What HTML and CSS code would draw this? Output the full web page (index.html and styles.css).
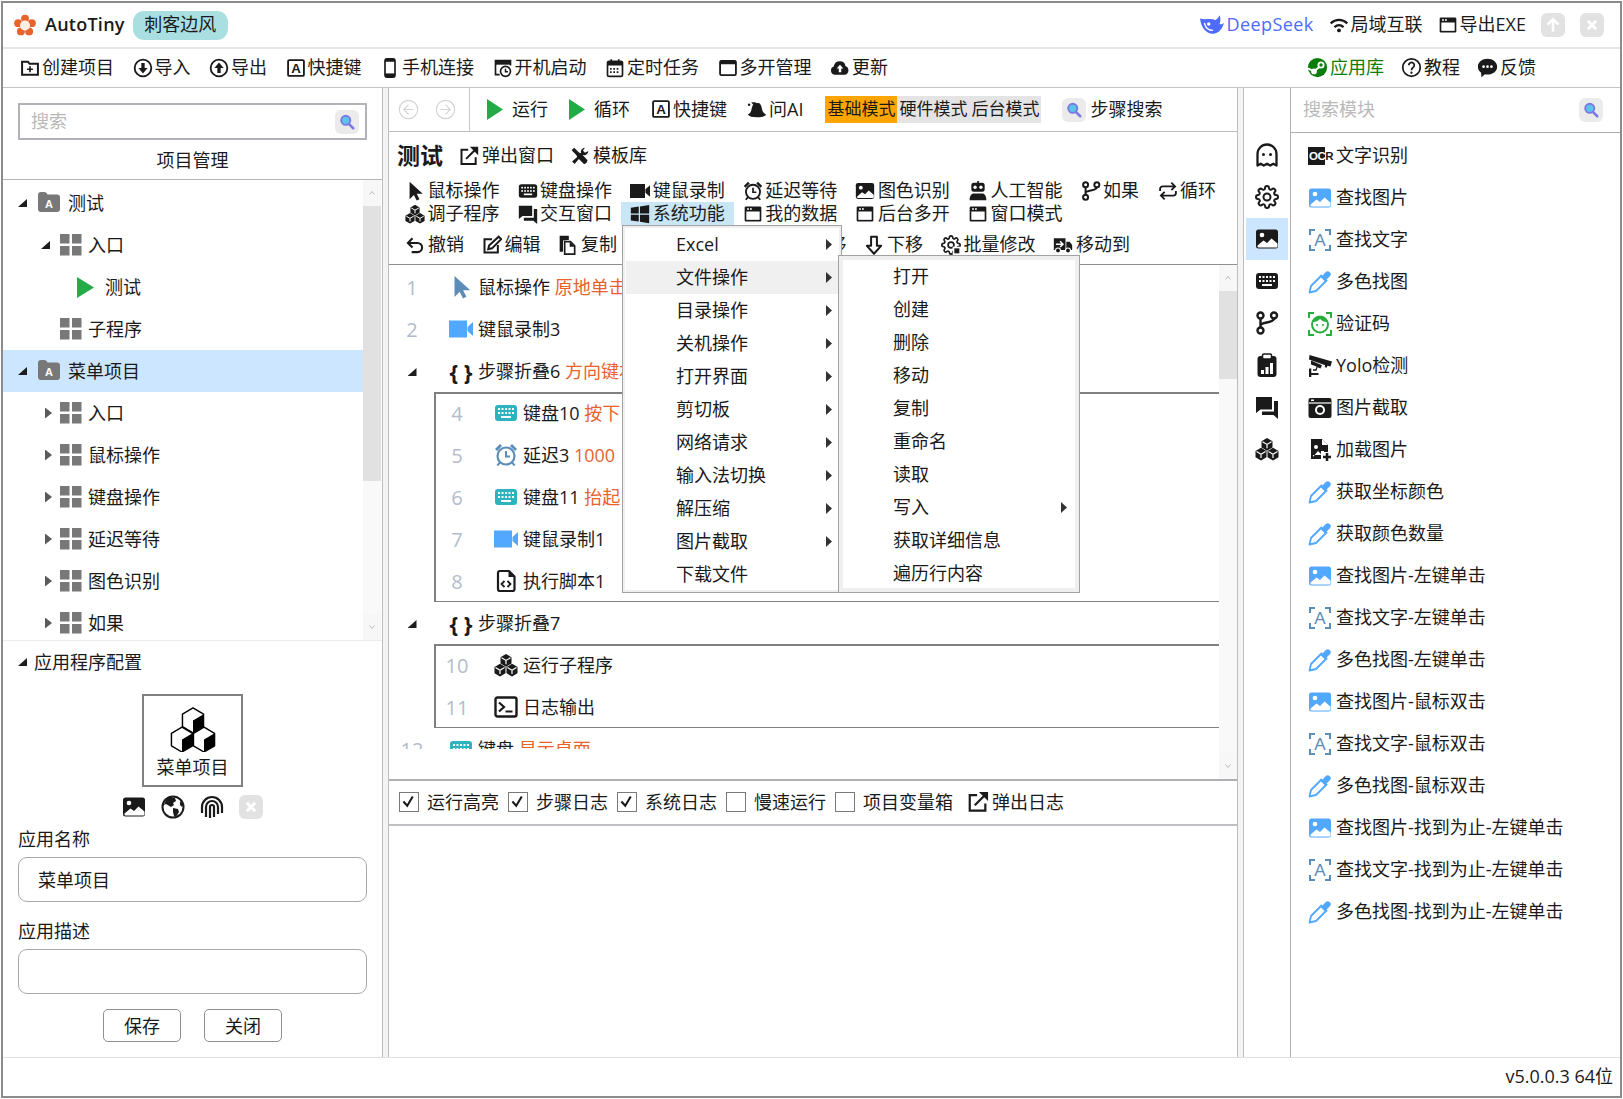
FILE: index.html
```html
<!DOCTYPE html>
<html lang="zh-CN">
<head>
  <meta charset="UTF-8" />
  <title>AutoTiny</title>
  <link rel="stylesheet" href="styles.css">
</head>
<body>
  <!-- 图标定义 -->
  <svg class="defs" xmlns="http://www.w3.org/2000/svg">
    <symbol id="logo" viewBox="0 0 24 24"><g fill="#e8622c"><circle cx="12" cy="5" r="4.300"/><circle cx="19.500" cy="10" r="4.300"/><circle cx="16.500" cy="19" r="4.300"/><circle cx="7.500" cy="19" r="4.300"/><circle cx="4.500" cy="10" r="4.300"/></g><circle cx="12" cy="12.500" r="5.500" fill="#fdeee6"/></symbol>
    <symbol id="whale" viewBox="0 0 24 24"><path fill="currentColor" d="M1 6c.5 8 6 15 13 14 5-.8 8-5 9-10-1.500 1.500-3 1.800-4 .8 1-2 1.200-5 0-7.800-.8 2-2.500 3.600-4 4.600C11.500 5.500 5 7.500 1 6z"/><circle cx="9" cy="11" r="1.600" fill="#fff"/><path d="M5 10c1 5 4 7 8 7" stroke="#fff" stroke-width="1.300" fill="none"/></symbol>
    <symbol id="wifi" viewBox="0 0 24 24"><g fill="none" stroke="currentColor" stroke-width="2.600"><path d="M2 10c6-5.500 14-5.500 20 0"/><path d="M6.500 14.500c3.500-3 7.500-3 11 0"/></g><circle cx="12" cy="18.500" r="2.300" fill="currentColor"/></symbol>
    <symbol id="appwin" viewBox="0 0 24 24"><rect x="2" y="3" width="20" height="18" rx="1.500" fill="currentColor"/><rect x="4" y="9" width="16" height="10" fill="#fff"/><rect x="5" y="5" width="2" height="2" fill="#fff"/><rect x="8.500" y="5" width="2" height="2" fill="#fff"/></symbol>
    <symbol id="folderplus" viewBox="0 0 24 24"><path fill="none" stroke="currentColor" stroke-width="2.400" d="M2.500 4.500h7l2 2.500h10v13h-19z"/><path fill="currentColor" d="M11 10h2v2.500h2.500v2H13V17h-2v-2.500H8.500v-2H11z"/></symbol>
    <symbol id="cdown" viewBox="0 0 24 24"><circle cx="12" cy="12" r="10" fill="none" stroke="currentColor" stroke-width="2.200"/><path fill="currentColor" d="M10 6h4v6h3.500L12 18.500 6.500 12H10z"/></symbol>
    <symbol id="cup" viewBox="0 0 24 24"><circle cx="12" cy="12" r="10" fill="none" stroke="currentColor" stroke-width="2.200"/><path fill="currentColor" d="M10 18h4v-6h3.500L12 5.500 6.500 12H10z"/></symbol>
    <symbol id="keybox" viewBox="0 0 24 24"><rect x="2.500" y="2.500" width="19" height="19" rx="1.500" fill="none" stroke="currentColor" stroke-width="2.200"/></symbol>
    <symbol id="phone" viewBox="0 0 24 24"><rect x="6" y="1" width="12" height="22" rx="2.500" fill="none" stroke="currentColor" stroke-width="2"/><rect x="6" y="1" width="12" height="3.500" fill="currentColor"/><rect x="6" y="18.500" width="12" height="4.500" fill="currentColor"/></symbol>
    <symbol id="boot" viewBox="0 0 24 24"><path fill="none" stroke="currentColor" stroke-width="2" d="M8 20H3V3h18v6"/><rect x="3" y="3" width="18" height="5" fill="currentColor"/><circle cx="15" cy="16" r="6" fill="#fff" stroke="currentColor" stroke-width="2"/><path d="M15 13v3.500h3" fill="none" stroke="currentColor" stroke-width="1.800"/></symbol>
    <symbol id="calendar" viewBox="0 0 24 24"><rect x="3" y="4" width="18" height="18" rx="2" fill="none" stroke="currentColor" stroke-width="2"/><rect x="3" y="4" width="18" height="5" fill="currentColor"/><path stroke="currentColor" stroke-width="2" d="M7.500 1.500v4M16.500 1.500v4"/><path stroke="currentColor" stroke-width="2" stroke-dasharray="2 2" d="M6 13h12M6 17h12"/></symbol>
    <symbol id="winline" viewBox="0 0 24 24"><rect x="2.500" y="3.500" width="19" height="17" rx="1.500" fill="none" stroke="currentColor" stroke-width="2.200"/><rect x="2.500" y="3.500" width="19" height="4" fill="currentColor"/></symbol>
    <symbol id="cloud" viewBox="0 0 24 24"><path fill="currentColor" d="M6 20a5 5 0 0 1-1.500-9.700A7.500 7.500 0 0 1 12 4a6.500 6.500 0 0 1 6.500 5.500A5.500 5.500 0 0 1 18 20z"/><path fill="#fff" d="M12 8l4 4.500h-2.500V17h-3v-4.500H8z"/></symbol>
    <symbol id="steam" viewBox="0 0 24 24"><circle cx="12" cy="12" r="11" fill="currentColor"/><circle cx="16" cy="9" r="4" fill="#fff"/><circle cx="16" cy="9" r="2" fill="currentColor"/><circle cx="8" cy="16.500" r="3.300" fill="#fff"/><path d="M1 13l7 3.500 6-5" stroke="#fff" stroke-width="2.200" fill="none"/></symbol>
    <symbol id="help" viewBox="0 0 24 24"><circle cx="12" cy="12" r="10" fill="none" stroke="currentColor" stroke-width="2"/><path d="M8.800 9.500a3.200 3.200 0 1 1 5 2.600c-1.200.8-1.800 1.400-1.800 2.900" fill="none" stroke="currentColor" stroke-width="2"/><circle cx="12" cy="18" r="1.300" fill="currentColor"/></symbol>
    <symbol id="bubble" viewBox="0 0 24 24"><path fill="currentColor" d="M12 2c6 0 11 3.800 11 9s-5 9-11 9c-1 0-2-.1-2.900-.3L5 23l-.3-5C2.500 16.200 1 13.800 1 11c0-5.200 5-9 11-9z"/><g fill="#fff"><circle cx="7.500" cy="11" r="1.500"/><circle cx="12" cy="11" r="1.500"/><circle cx="16.500" cy="11" r="1.500"/></g></symbol>
    <symbol id="play" viewBox="0 0 24 24" preserveAspectRatio="none"><path fill="#22ab46" d="M0 0l24 12L0 24z"/></symbol>
    <symbol id="circleleft" viewBox="0 0 24 24"><circle cx="12" cy="12" r="10.500" fill="none" stroke="currentColor" stroke-width="1.300"/><path fill="none" stroke="currentColor" stroke-width="1.300" d="M12 6.500L6.500 12l5.500 5.500M6.500 12H18"/></symbol>
    <symbol id="circleright" viewBox="0 0 24 24"><circle cx="12" cy="12" r="10.500" fill="none" stroke="currentColor" stroke-width="1.300"/><path fill="none" stroke="currentColor" stroke-width="1.300" d="M12 6.500l5.500 5.500-5.500 5.500M17.500 12H6"/></symbol>
    <symbol id="hat" viewBox="0 0 24 24"><path fill="currentColor" d="M12 5c3-1 5 1 6 7 .5 3 2 5 5 7-2 2-5 3-11 3S3 21 1 19c3-2 4-4 4.500-7 .4-2 1-4 2-5L5 4c3 0 5 0 7 1z"/><circle cx="2.500" cy="7" r="1.500" fill="currentColor"/></symbol>
    <symbol id="search" viewBox="0 0 24 24"><circle cx="10.500" cy="10" r="5.500" fill="#5cc3ea" stroke="#7c78e2" stroke-width="2.200"/><path d="M14.500 14.500l5 5" stroke="#7c78e2" stroke-width="3" stroke-linecap="round"/></symbol>
    <symbol id="popout" viewBox="0 0 24 24"><path fill="none" stroke="currentColor" stroke-width="2.400" d="M11 4.500H3v17h17v-8"/><path fill="none" stroke="currentColor" stroke-width="2.400" d="M8.500 15.500L21 3"/><path fill="currentColor" d="M13 1h10v10z"/></symbol>
    <symbol id="tools" viewBox="0 0 24 24"><path fill="currentColor" d="M2 5l3-3 6 6 2 .5L21 17l-1 3-3 2-8.500-8.500L8 11.500z"/><path fill="currentColor" d="M22 6a5 5 0 0 1-7 4.600L5.500 21.500 2.500 18.500 13.400 9A5 5 0 0 1 18 2l-2.500 3.500 2.500 2.500z"/></symbol>
    <symbol id="cursor" viewBox="0 0 24 24"><path fill="currentColor" d="M5.500 1v21l5.200-5.200 3.300 6.700 3.400-1.700-3.300-6.500h7.200z"/></symbol>
    <symbol id="keyboard" viewBox="0 0 24 24"><rect x="1" y="4" width="22" height="16" rx="3" fill="currentColor"/><g fill="#fff"><rect x="4" y="7" width="2" height="2"/><rect x="7.500" y="7" width="2" height="2"/><rect x="11" y="7" width="2" height="2"/><rect x="14.500" y="7" width="2" height="2"/><rect x="18" y="7" width="2" height="2"/><rect x="4" y="11" width="2" height="2"/><rect x="7.500" y="11" width="2" height="2"/><rect x="11" y="11" width="2" height="2"/><rect x="14.500" y="11" width="2" height="2"/><rect x="18" y="11" width="2" height="2"/><rect x="7" y="15" width="10" height="2"/></g></symbol>
    <symbol id="video" viewBox="0 0 24 24"><path fill="currentColor" d="M0 3.500h18v17H0zM18.500 10L24 5v14l-5.500-5z"/></symbol>
    <symbol id="alarm" viewBox="0 0 24 24"><circle cx="12" cy="13" r="8.500" fill="none" stroke="currentColor" stroke-width="2.200"/><path fill="none" stroke="currentColor" stroke-width="2" d="M12 8v5.500h4"/><path fill="currentColor" d="M1 6l5-5 2 2-5 5zM23 6l-5-5-2 2 5 5zM5 19l-2.500 3 1.500 1 3-3zM19 19l2.500 3-1.500 1-3-3z"/></symbol>
    <symbol id="image" viewBox="0 0 24 24"><rect x="1" y="2.500" width="22" height="19" rx="2.500" fill="currentColor"/><circle cx="7" cy="8" r="2.300" fill="#fff"/><path fill="#fff" d="M2.500 18.500l6-5 3.500 2.500 4.500-4.500 6 5v3a1 1 0 0 1-1 1h-18a1 1 0 0 1-1-1z"/></symbol>
    <symbol id="robot" viewBox="0 0 24 24"><path fill="currentColor" d="M11 0h2v2h4a3 3 0 0 1 3 3v5a3 3 0 0 1-3 3H7a3 3 0 0 1-3-3V5a3 3 0 0 1 3-3h4zM7 15h10c3 0 5 3 5 8H2c0-5 2-8 5-8z"/><circle cx="8.500" cy="7.500" r="2" fill="#fff"/><circle cx="15.500" cy="7.500" r="2" fill="#fff"/></symbol>
    <symbol id="branch" viewBox="0 0 24 24"><g fill="none" stroke="currentColor" stroke-width="2.400"><circle cx="5.500" cy="4.500" r="3"/><circle cx="19" cy="4.500" r="3"/><circle cx="5.500" cy="19.500" r="3"/><path d="M5.500 7.500v9M19 7.500c0 5-13.500 3-13.500 7"/></g></symbol>
    <symbol id="loop" viewBox="0 0 24 24"><g fill="none" stroke="currentColor" stroke-width="2.200"><path d="M2.500 12V9.500a3 3 0 0 1 3-3H20M16 2l4.500 4.500L16 11M21.500 12v2.500a3 3 0 0 1-3 3H4M8 22l-4.500-4.500L8 13"/></g></symbol>
    <symbol id="cubes" viewBox="0 0 24 24"><g fill="currentColor"><path d="M12 1l5.500 3.200v6.300L12 13.700 6.500 10.500V4.200z"/><path d="M6 10.800l5.500 3.200v6.300L6 23.500.5 20.300V14z"/><path d="M18 10.800l5.500 3.200v6.300L18 23.500l-5.500-3.200V14z"/></g><g fill="none" stroke="#fff" stroke-width="1.200"><path d="M7.500 4.800L12 7.400l4.500-2.600M12 7.400v3.800M1.500 14.600L6 17.200l4.500-2.600M6 17.200V21M13.500 14.600l4.500 2.600 4.500-2.600M18 17.200V21"/></g></symbol>
    <symbol id="cubesline" viewBox="0 0 48 48"><g fill="#fff" stroke="#000" stroke-width="1.500" stroke-linejoin="round"><path d="M24 2l11 6.500v13L24 28l-11-6.500v-13z"/><path d="M12.500 22L23.500 28.500v13L12.500 48 1.500 41.500v-13z"/><path d="M35.500 22l11 6.500v13l-11 6.500-11-6.500v-13z"/></g><g fill="#000"><path d="M24 15l11-6.500v13L24 28zM12.500 35l11-6.500v13L12.500 48zM35.500 35l11-6.500v13L35.500 48z"/></g></symbol>
    <symbol id="chats" viewBox="0 0 24 24"><path fill="currentColor" d="M1 2h16v12.500H5.500L1 18zM19 6h4v18l-4.500-4H7v-3.500h12z"/></symbol>
    <symbol id="windows" viewBox="0 0 24 24"><path fill="currentColor" d="M1 4.500l9.500-1.400v8.400H1zM12 2.900L23 1.300v10.200H12zM1 12.800h9.500v8.300L1 19.700zM12 12.800h11V23l-11-1.600z"/></symbol>
    <symbol id="undo" viewBox="0 0 24 24"><path fill="none" stroke="currentColor" stroke-width="2.500" d="M9 4L3.500 9.500 9 15M3.500 9.500H15a5.500 5.500 0 0 1 0 11H8"/></symbol>
    <symbol id="edit" viewBox="0 0 24 24"><path fill="none" stroke="currentColor" stroke-width="2.400" d="M12 5H3v16h16v-9"/><path fill="none" stroke="currentColor" stroke-width="2.400" d="M20 2l3 3-11 11-4.500 1 1-4.500z"/></symbol>
    <symbol id="copy" viewBox="0 0 24 24"><path fill="currentColor" d="M2 1h11v5h-1.500L6 6.500V20H2z"/><path fill="none" stroke="currentColor" stroke-width="2" d="M8 8h7l5 5v10H8z"/><path fill="currentColor" d="M14 8l6 6h-6z"/></symbol>
    <symbol id="downarrow" viewBox="0 0 24 24"><path fill="none" stroke="currentColor" stroke-width="2.400" stroke-linejoin="round" d="M8.500 2h7v11h5L12 22.500 3.500 13h5z"/></symbol>
    <symbol id="uparrow" viewBox="0 0 24 24"><path fill="none" stroke="currentColor" stroke-width="2.400" stroke-linejoin="round" d="M8.500 22h7V11h5L12 1.500 3.500 11h5z"/></symbol>
    <symbol id="gear" viewBox="0 0 24 24"><circle cx="12" cy="12" r="3.500" fill="none" stroke="currentColor" stroke-width="2"/><path fill="none" stroke="currentColor" stroke-width="2" d="M19.400 15a1.650 1.650 0 0 0 .33 1.820l.06.06a2 2 0 0 1-2.830 2.830l-.06-.06a1.650 1.650 0 0 0-1.820-.33 1.650 1.650 0 0 0-1 1.510V21a2 2 0 0 1-4 0v-.09A1.650 1.650 0 0 0 9 19.400a1.650 1.650 0 0 0-1.820.33l-.06.06a2 2 0 0 1-2.830-2.830l.06-.06a1.650 1.650 0 0 0 .33-1.820 1.650 1.650 0 0 0-1.510-1H3a2 2 0 0 1 0-4h.09A1.650 1.650 0 0 0 4.600 9a1.650 1.650 0 0 0-.33-1.820l-.06-.06a2 2 0 0 1 2.830-2.830l.06.06a1.650 1.650 0 0 0 1.820.33H9a1.650 1.650 0 0 0 1-1.510V3a2 2 0 0 1 4 0v.09a1.650 1.650 0 0 0 1 1.510 1.650 1.650 0 0 0 1.820-.33l.06-.06a2 2 0 0 1 2.830 2.830l-.06.06a1.650 1.650 0 0 0-.33 1.820V9a1.650 1.650 0 0 0 1.510 1H21a2 2 0 0 1 0 4h-.09a1.650 1.650 0 0 0-1.510 1z"/></symbol>
    <symbol id="batch" viewBox="0 0 24 24"><use href="#gear"/><rect x="14" y="14" width="9" height="9" fill="#fff"/><rect x="16" y="16" width="6" height="6" fill="currentColor"/></symbol>
    <symbol id="truck" viewBox="0 0 24 24"><path fill="currentColor" d="M1 4h14v14H1zM16 8h4l3 4v6h-7z"/><circle cx="6" cy="18.500" r="3" fill="currentColor" stroke="#fff" stroke-width="1.300"/><circle cx="18" cy="18.500" r="3" fill="currentColor" stroke="#fff" stroke-width="1.300"/><path fill="none" stroke="#fff" stroke-width="1.800" d="M3.500 11h8M8.500 7.500L12 11l-3.500 3.500"/></symbol>
    <symbol id="script" viewBox="0 0 24 24"><path fill="none" stroke="currentColor" stroke-width="2.200" stroke-linejoin="round" d="M4 4a2 2 0 0 1 2-2h9l5.500 5.500V20a2 2 0 0 1-2 2H6a2 2 0 0 1-2-2z"/><path fill="currentColor" d="M14.500 2v6h6z"/><path fill="none" stroke="currentColor" stroke-width="1.800" d="M10.500 12l-3 3 3 3M13.500 12l3 3-3 3"/></symbol>
    <symbol id="terminal" viewBox="0 0 24 24"><rect x="1.500" y="2.500" width="21" height="19" rx="2" fill="none" stroke="currentColor" stroke-width="2.400"/><path fill="none" stroke="currentColor" stroke-width="2.200" d="M5 7.500l5 4.500-5 4.500"/><rect x="11.500" y="15.500" width="7" height="2" fill="currentColor"/></symbol>
    <symbol id="ghost" viewBox="0 0 24 24"><path fill="none" stroke="currentColor" stroke-width="2.300" stroke-linejoin="round" d="M2.500 22.500V11a9.500 9.500 0 0 1 19 0v11.500l-3.200-1.800-3.100 1.800-3.200-1.800-3.200 1.800-3.100-1.800z"/><circle cx="8.500" cy="11.500" r="1.500" fill="currentColor"/><circle cx="15.500" cy="11.500" r="1.500" fill="currentColor"/></symbol>
    <symbol id="report" viewBox="0 0 24 24"><rect x="2.500" y="3" width="19" height="21" rx="3" fill="currentColor"/><rect x="7.500" y="1" width="9" height="5" rx="1.500" fill="#fff" stroke="currentColor" stroke-width="1.500"/><g fill="#fff"><rect x="6" y="17" width="3" height="4"/><rect x="10.500" y="14" width="3" height="7"/><rect x="15" y="10" width="3" height="11"/></g></symbol>
    <symbol id="brackets" viewBox="0 0 24 24"><path fill="none" stroke="currentColor" stroke-width="2" d="M2 7V2h5M17 2h5v5M2 17v5h5M17 22h5v-5"/></symbol>
    <symbol id="dropper" viewBox="0 0 24 24"><path fill="none" stroke="currentColor" stroke-width="1.800" stroke-linejoin="round" d="M12.500 6.500L3 16l-1.500 6.500L8 21l9.500-9.500"/><path fill="currentColor" d="M11.500 6l6.500 6.500 1.800-1.800-1.200-1.200 3.300-3.300a2.900 2.900 0 0 0-4.100-4.100L14.500 5.400l-1.200-1.200z"/></symbol>
    <symbol id="face" viewBox="0 0 24 24"><path fill="none" stroke="currentColor" stroke-width="2" d="M1 6V1h5M18 1h5v5M1 18v5h5M18 23h5v-5"/><circle cx="12" cy="12.500" r="8" fill="none" stroke="currentColor" stroke-width="2"/><path fill="currentColor" d="M5 10c1-5 4-6 7-6s6 1 7 6c-3 0-5-1-7-3-2 2-4 3-7 3z"/><circle cx="9" cy="13" r="1" fill="currentColor"/><circle cx="15" cy="13" r="1" fill="currentColor"/></symbol>
    <symbol id="cctv" viewBox="0 0 24 24"><path fill="currentColor" d="M1.500 1l22.500 6.500-1.500 5-3-.8-1 2-2-.6.700-1.900L1 5.500z"/><path fill="currentColor" d="M3 6.500l11 4.800-1.500 3.200-3-1.200-1 3.500H5v-1.500h2.700l.8-2.900L3 10.500zM1 14.500h2.300V23H1z"/><rect x="2.500" y="19" width="8" height="2" fill="currentColor"/></symbol>
    <symbol id="camera" viewBox="0 0 24 24"><rect x="0.500" y="2" width="23" height="20" rx="2" fill="currentColor"/><path stroke="#fff" stroke-width="1.200" d="M1 7h22"/><circle cx="12" cy="14" r="5" fill="#fff"/><circle cx="12" cy="14" r="3" fill="currentColor"/><rect x="3" y="3.500" width="3" height="1.500" fill="#fff"/></symbol>
    <symbol id="imgadd" viewBox="0 0 24 24"><path fill="currentColor" d="M3 1h11l6 6v7h-7v7H3z"/><circle cx="8" cy="9" r="2" fill="#fff"/><path fill="#fff" d="M5 19l5-6 3 3 3-2v-1h-3v4H5z"/><path fill="#fff" d="M14 1l6 6h-6z"/><path stroke="currentColor" stroke-width="2.500" d="M19 15v8M15 19h8"/></symbol>
    <symbol id="globe" viewBox="0 0 24 24"><circle cx="12" cy="12" r="10.500" fill="#fff" stroke="currentColor" stroke-width="2"/><path fill="currentColor" d="M9 2l5 1 1 3-3 2 1 2-3 2-5-3-2 1c1-4 3-7 6-8zM12 13l5 1 1 3-3 5-2-1-1-4zM19 6l3 3-1 3-2-2z"/></symbol>
    <symbol id="finger" viewBox="0 0 24 24"><g fill="none" stroke="currentColor" stroke-width="2.200"><path d="M2 18V12a10 10 0 0 1 20 0v6"/><path d="M6 22v-10a6 6 0 0 1 12 0v7"/><path d="M10 23V12a2 2 0 0 1 4 0v10"/></g></symbol>
    <symbol id="app-folder" viewBox="0 0 24 24"><path fill="#787878" d="M1 4a3 3 0 0 1 3-3h3c2 0 3 1 3.500 2.500H20a3 3 0 0 1 3 3V18a3 3 0 0 1-3 3H4a3 3 0 0 1-3-3z"/></symbol>
    <symbol id="grid" viewBox="0 0 22 22"><g fill="#787878"><rect x="0" y="0" width="9.500" height="9.500"/><rect x="12" y="0" width="9.500" height="9.500"/><rect x="0" y="12" width="9.500" height="9.500"/><rect x="12" y="12" width="9.500" height="9.500"/></g></symbol>
    <symbol id="check" viewBox="0 0 20 20"><path fill="none" stroke="#1a1a1a" stroke-width="2.400" d="M4 10l4.500 5L15 4"/></symbol>
    <symbol id="arrowup" viewBox="0 0 24 24"><path fill="none" stroke="#fff" stroke-width="3" d="M12 20V5M5.500 11.500L12 5l6.500 6.500"/></symbol>
    <symbol id="cross" viewBox="0 0 24 24"><path fill="none" stroke="#fff" stroke-width="3.500" d="M7 7l10 10M17 7L7 17"/></symbol>
    <symbol id="chev" viewBox="0 0 8 8"><path fill="none" stroke="#bbb" d="M1.500 5.500L4 2.500l2.500 3"/></symbol>
  </svg>

  <div class="app">
    <!-- 标题栏 -->
    <header class="titlebar">
      <svg class="ic logo"><use href="#logo"/></svg>
      <span class="brand">AutoTiny</span>
      <span class="pill">刺客边风</span>
      <div class="title-right">
        <span class="tb deepseek"><svg class="ic whale-ic"><use href="#whale"/></svg>DeepSeek</span>
        <span class="tb"><svg class="ic"><use href="#wifi"/></svg>局域互联</span>
        <span class="tb"><svg class="ic"><use href="#appwin"/></svg>导出EXE</span>
        <span class="win-btn"><svg class="ic"><use href="#arrowup"/></svg></span>
        <span class="win-btn"><svg class="ic"><use href="#cross"/></svg></span>
      </div>
    </header>

    <!-- 菜单栏 -->
    <nav class="menubar">
      <span class="tb"><svg class="ic"><use href="#folderplus"/></svg>创建项目</span>
      <span class="tb"><svg class="ic"><use href="#cdown"/></svg>导入</span>
      <span class="tb"><svg class="ic"><use href="#cup"/></svg>导出</span>
      <span class="tb"><svg class="ic" viewBox="0 0 24 24"><use href="#keybox"/><text class="g-key" x="12" y="18">A</text></svg>快捷键</span>
      <span class="tb"><svg class="ic"><use href="#phone"/></svg>手机连接</span>
      <span class="tb"><svg class="ic"><use href="#boot"/></svg>开机启动</span>
      <span class="tb"><svg class="ic"><use href="#calendar"/></svg>定时任务</span>
      <span class="tb"><svg class="ic"><use href="#winline"/></svg>多开管理</span>
      <span class="tb"><svg class="ic"><use href="#cloud"/></svg>更新</span>
      <div class="menu-right">
        <span class="tb store"><svg class="ic"><use href="#steam"/></svg>应用库</span>
        <span class="tb"><svg class="ic"><use href="#help"/></svg>教程</span>
        <span class="tb"><svg class="ic"><use href="#bubble"/></svg>反馈</span>
      </div>
    </nav>

    <div class="main">
      <!-- 左侧：项目管理 -->
      <aside class="left">
        <div class="left-head">
          <div class="search-box">
            <span class="placeholder">搜索</span>
            <span class="search-btn"><svg class="ic"><use href="#search"/></svg></span>
          </div>
          <div class="left-title">项目管理</div>
        </div>
        <div class="tree-wrap">
          <div class="tree">
            <div class="row lv0"><i class="tri-open"></i><svg class="ic24" viewBox="0 0 24 24"><use href="#app-folder"/><text class="g-folder" x="12" y="17">A</text></svg><span>测试</span></div>
            <div class="row lv1"><i class="tri-open"></i><svg class="ic-grid"><use href="#grid"/></svg><span>入口</span></div>
            <div class="row lv2"><svg class="ic-play"><use href="#play"/></svg><span>测试</span></div>
            <div class="row lv1"><i class="tri-none"></i><svg class="ic-grid"><use href="#grid"/></svg><span>子程序</span></div>
            <div class="row lv0 selected"><i class="tri-open"></i><svg class="ic24" viewBox="0 0 24 24"><use href="#app-folder"/><text class="g-folder" x="12" y="17">A</text></svg><span>菜单项目</span></div>
            <div class="row lv1"><i class="tri-closed"></i><svg class="ic-grid"><use href="#grid"/></svg><span>入口</span></div>
            <div class="row lv1"><i class="tri-closed"></i><svg class="ic-grid"><use href="#grid"/></svg><span>鼠标操作</span></div>
            <div class="row lv1"><i class="tri-closed"></i><svg class="ic-grid"><use href="#grid"/></svg><span>键盘操作</span></div>
            <div class="row lv1"><i class="tri-closed"></i><svg class="ic-grid"><use href="#grid"/></svg><span>延迟等待</span></div>
            <div class="row lv1"><i class="tri-closed"></i><svg class="ic-grid"><use href="#grid"/></svg><span>图色识别</span></div>
            <div class="row lv1"><i class="tri-closed"></i><svg class="ic-grid"><use href="#grid"/></svg><span>如果</span></div>
          </div>
          <div class="sbar sbar-left">
            <div class="sbar-btn"><svg class="chev"><use href="#chev"/></svg></div>
            <div class="sbar-thumb"></div>
            <div class="sbar-track"></div>
            <div class="sbar-btn"><svg class="chev flip"><use href="#chev"/></svg></div>
          </div>
        </div>
        <div class="config">
          <div class="config-head"><i class="tri-open"></i><span>应用程序配置</span></div>
          <div class="app-box">
            <svg class="cubes-big"><use href="#cubesline"/></svg>
            <span>菜单项目</span>
          </div>
          <div class="config-icons">
            <svg class="ic24"><use href="#image"/></svg>
            <svg class="ic24"><use href="#globe"/></svg>
            <svg class="ic24"><use href="#finger"/></svg>
            <span class="win-btn"><svg class="ic"><use href="#cross"/></svg></span>
          </div>
          <div class="field-label">应用名称</div>
          <div class="field">菜单项目</div>
          <div class="field-label">应用描述</div>
          <div class="field"></div>
          <div class="config-btns">
            <span class="btn">保存</span>
            <span class="btn">关闭</span>
          </div>
        </div>
      </aside>

      <div class="split"></div>

      <!-- 中间：步骤编辑 -->
      <section class="mid">
        <div class="toolbar">
          <div class="nav-btns">
            <svg class="ic nav"><use href="#circleleft"/></svg>
            <svg class="ic nav"><use href="#circleright"/></svg>
          </div>
          <span class="tb"><svg class="ic-run"><use href="#play"/></svg>运行</span>
          <span class="tb"><svg class="ic-run"><use href="#play"/></svg>循环</span>
          <span class="tb"><svg class="ic" viewBox="0 0 24 24"><use href="#keybox"/><text class="g-key" x="12" y="18">A</text></svg>快捷键</span>
          <span class="tb ask"><svg class="ic"><use href="#hat"/></svg>问AI</span>
          <div class="modes">
            <span class="mode active">基础模式</span>
            <span class="mode">硬件模式</span>
            <span class="mode">后台模式</span>
          </div>
          <span class="step-search"><span class="search-btn"><svg class="ic"><use href="#search"/></svg></span>步骤搜索</span>
        </div>

        <div class="head">
          <div class="head-title">
            <strong>测试</strong>
            <span class="tb"><svg class="ic"><use href="#popout"/></svg>弹出窗口</span>
            <span class="tb"><svg class="ic"><use href="#tools"/></svg>模板库</span>
          </div>
          <div class="fn-grid">
            <span class="fn"><svg class="ic"><use href="#cursor"/></svg>鼠标操作</span>
            <span class="fn"><svg class="ic"><use href="#keyboard"/></svg>键盘操作</span>
            <span class="fn"><svg class="ic"><use href="#video"/></svg>键鼠录制</span>
            <span class="fn"><svg class="ic"><use href="#alarm"/></svg>延迟等待</span>
            <span class="fn"><svg class="ic"><use href="#image"/></svg>图色识别</span>
            <span class="fn"><svg class="ic"><use href="#robot"/></svg>人工智能</span>
            <span class="fn"><svg class="ic"><use href="#branch"/></svg>如果</span>
            <span class="fn"><svg class="ic"><use href="#loop"/></svg>循环</span>
            <span class="fn fn-break"><svg class="ic"><use href="#cubes"/></svg>调子程序</span>
            <span class="fn"><svg class="ic"><use href="#chats"/></svg>交互窗口</span>
            <span class="fn open"><svg class="ic"><use href="#windows"/></svg>系统功能</span>
            <span class="fn"><svg class="ic"><use href="#appwin"/></svg>我的数据</span>
            <span class="fn"><svg class="ic"><use href="#appwin"/></svg>后台多开</span>
            <span class="fn"><svg class="ic"><use href="#appwin"/></svg>窗口模式</span>
          </div>
          <div class="actions">
            <span class="act"><svg class="ic"><use href="#undo"/></svg>撤销</span>
            <span class="act"><svg class="ic"><use href="#edit"/></svg>编辑</span>
            <span class="act"><svg class="ic"><use href="#copy"/></svg>复制</span>
            <span class="act"><svg class="ic"><use href="#copy"/></svg>粘贴</span>
            <span class="act"><svg class="ic"><use href="#cross"/></svg>删除</span>
            <span class="act"><svg class="ic"><use href="#uparrow"/></svg>上移</span>
            <span class="act"><svg class="ic"><use href="#downarrow"/></svg>下移</span>
            <span class="act"><svg class="ic"><use href="#batch"/></svg>批量修改</span>
            <span class="act"><svg class="ic"><use href="#truck"/></svg>移动到</span>
          </div>
        </div>

        <div class="steps-wrap">
          <div class="steps-area">
            <div class="steps">
              <div class="step"><span class="num">1</span><svg class="ic24 c-steel"><use href="#cursor"/></svg><span class="txt">鼠标操作 <em>原地单击</em></span></div>
              <div class="step"><span class="num">2</span><svg class="ic24 c-blue"><use href="#video"/></svg><span class="txt">键鼠录制3</span></div>
              <div class="step"><span class="num"><i class="tri-open"></i></span><span class="braces">{ }</span><span class="txt">步骤折叠6 <em>方向键右</em></span></div>
              <div class="group">
                <div class="step"><span class="num">4</span><svg class="ic24 c-teal"><use href="#keyboard"/></svg><span class="txt">键盘10 <em>按下</em></span></div>
                <div class="step"><span class="num">5</span><svg class="ic24 c-steel"><use href="#alarm"/></svg><span class="txt">延迟3 <em>1000</em></span></div>
                <div class="step"><span class="num">6</span><svg class="ic24 c-teal"><use href="#keyboard"/></svg><span class="txt">键盘11 <em>抬起</em></span></div>
                <div class="step"><span class="num">7</span><svg class="ic24 c-blue"><use href="#video"/></svg><span class="txt">键鼠录制1</span></div>
                <div class="step"><span class="num">8</span><svg class="ic24"><use href="#script"/></svg><span class="txt">执行脚本1</span></div>
              </div>
              <div class="step"><span class="num"><i class="tri-open"></i></span><span class="braces">{ }</span><span class="txt">步骤折叠7</span></div>
              <div class="group">
                <div class="step"><span class="num">10</span><svg class="ic24"><use href="#cubes"/></svg><span class="txt">运行子程序</span></div>
                <div class="step"><span class="num">11</span><svg class="ic24"><use href="#terminal"/></svg><span class="txt">日志输出</span></div>
              </div>
              <div class="step"><span class="num">12</span><svg class="ic24 c-teal"><use href="#keyboard"/></svg><span class="txt">键盘 <em>显示桌面</em></span></div>
            </div>
          </div>
          <div class="sbar">
            <div class="sbar-btn"><svg class="chev"><use href="#chev"/></svg></div>
            <div class="sbar-thumb thumb-steps"></div>
            <div class="sbar-track"></div>
            <div class="sbar-btn"><svg class="chev flip"><use href="#chev"/></svg></div>
          </div>
        </div>

        <div class="checks">
          <span class="chk"><i class="box"><svg><use href="#check"/></svg></i>运行高亮</span>
          <span class="chk"><i class="box"><svg><use href="#check"/></svg></i>步骤日志</span>
          <span class="chk"><i class="box"><svg><use href="#check"/></svg></i>系统日志</span>
          <span class="chk"><i class="box"></i>慢速运行</span>
          <span class="chk"><i class="box"></i>项目变量箱</span>
          <span class="tb pop-log"><svg class="ic"><use href="#popout"/></svg>弹出日志</span>
        </div>
        <div class="log"></div>
      </section>

      <div class="split"></div>

      <!-- 右侧：模块分类 -->
      <div class="rail">
        <span class="rail-item"><svg class="ic24"><use href="#ghost"/></svg></span>
        <span class="rail-item"><svg class="ic24"><use href="#gear"/></svg></span>
        <span class="rail-item on"><svg class="ic24"><use href="#image"/></svg></span>
        <span class="rail-item"><svg class="ic24"><use href="#keyboard"/></svg></span>
        <span class="rail-item"><svg class="ic24"><use href="#branch"/></svg></span>
        <span class="rail-item"><svg class="ic24"><use href="#report"/></svg></span>
        <span class="rail-item"><svg class="ic24"><use href="#chats"/></svg></span>
        <span class="rail-item"><svg class="ic24"><use href="#cubes"/></svg></span>
      </div>

      <aside class="right">
        <div class="right-head">
          <span class="placeholder">搜索模块</span>
          <span class="search-btn"><svg class="ic"><use href="#search"/></svg></span>
        </div>
        <div class="mod-list">
          <div class="mod"><span class="ocr"><b>OC</b>R</span>文字识别</div>
          <div class="mod"><svg class="ic24 c-blue"><use href="#image"/></svg>查找图片</div>
          <div class="mod"><svg class="ic24 c-steel" viewBox="0 0 24 24"><use href="#brackets"/><text class="g-scan" x="12" y="18">A</text></svg>查找文字</div>
          <div class="mod"><svg class="ic24 c-blue"><use href="#dropper"/></svg>多色找图</div>
          <div class="mod"><svg class="ic24 c-green"><use href="#face"/></svg>验证码</div>
          <div class="mod"><svg class="ic24"><use href="#cctv"/></svg>Yolo检测</div>
          <div class="mod"><svg class="ic24"><use href="#camera"/></svg>图片截取</div>
          <div class="mod"><svg class="ic24"><use href="#imgadd"/></svg>加载图片</div>
          <div class="mod"><svg class="ic24 c-blue"><use href="#dropper"/></svg>获取坐标颜色</div>
          <div class="mod"><svg class="ic24 c-blue"><use href="#dropper"/></svg>获取颜色数量</div>
          <div class="mod"><svg class="ic24 c-blue"><use href="#image"/></svg>查找图片-左键单击</div>
          <div class="mod"><svg class="ic24 c-steel" viewBox="0 0 24 24"><use href="#brackets"/><text class="g-scan" x="12" y="18">A</text></svg>查找文字-左键单击</div>
          <div class="mod"><svg class="ic24 c-blue"><use href="#dropper"/></svg>多色找图-左键单击</div>
          <div class="mod"><svg class="ic24 c-blue"><use href="#image"/></svg>查找图片-鼠标双击</div>
          <div class="mod"><svg class="ic24 c-steel" viewBox="0 0 24 24"><use href="#brackets"/><text class="g-scan" x="12" y="18">A</text></svg>查找文字-鼠标双击</div>
          <div class="mod"><svg class="ic24 c-blue"><use href="#dropper"/></svg>多色找图-鼠标双击</div>
          <div class="mod"><svg class="ic24 c-blue"><use href="#image"/></svg>查找图片-找到为止-左键单击</div>
          <div class="mod"><svg class="ic24 c-steel" viewBox="0 0 24 24"><use href="#brackets"/><text class="g-scan" x="12" y="18">A</text></svg>查找文字-找到为止-左键单击</div>
          <div class="mod"><svg class="ic24 c-blue"><use href="#dropper"/></svg>多色找图-找到为止-左键单击</div>
        </div>
      </aside>
    </div>

    <footer class="status">v5.0.0.3 64位</footer>

    <!-- 系统功能下拉菜单 -->
    <div class="popup popup-main">
      <div class="pop-item">Excel<i class="tri-menu"></i></div>
      <div class="pop-item hover">文件操作<i class="tri-menu"></i></div>
      <div class="pop-item">目录操作<i class="tri-menu"></i></div>
      <div class="pop-item">关机操作<i class="tri-menu"></i></div>
      <div class="pop-item">打开界面<i class="tri-menu"></i></div>
      <div class="pop-item">剪切板<i class="tri-menu"></i></div>
      <div class="pop-item">网络请求<i class="tri-menu"></i></div>
      <div class="pop-item">输入法切换<i class="tri-menu"></i></div>
      <div class="pop-item">解压缩<i class="tri-menu"></i></div>
      <div class="pop-item">图片截取<i class="tri-menu"></i></div>
      <div class="pop-item">下载文件</div>
    </div>
    <div class="popup popup-sub">
      <div class="pop-item">打开</div>
      <div class="pop-item">创建</div>
      <div class="pop-item">删除</div>
      <div class="pop-item">移动</div>
      <div class="pop-item">复制</div>
      <div class="pop-item">重命名</div>
      <div class="pop-item">读取</div>
      <div class="pop-item">写入<i class="tri-menu"></i></div>
      <div class="pop-item">获取详细信息</div>
      <div class="pop-item">遍历行内容</div>
    </div>
  </div>
</body>
</html>
```

FILE: styles.css
```css
* {
  box-sizing: border-box;
}

html, body {
  margin: 0;
  padding: 0;
  background: #fff;
}

body {
  font-family: "Open Sans", "Noto Sans CJK SC", sans-serif;
  font-size: 18px;
  line-height: 1.3;
  color: #1a1a1a;
  overflow: hidden;
}

.defs {
  position: absolute;
  width: 0;
  height: 0;
}

em {
  font-style: normal;
  color: #e8622c;
}

/* ===== 图标尺寸 ===== */
.ic {
  width: 20px;
  height: 20px;
  flex: none;
}

.ic24 {
  width: 24px;
  height: 24px;
  flex: none;
}

.c-steel { color: #5b8db8; }
.c-blue { color: #52a8ff; }
.c-teal { color: #2db3bd; }
.c-green { color: #27ae3f; }

/* 图标里的字母 */
.g-key,
.g-folder,
.g-scan {
  font-family: "Liberation Sans", sans-serif;
  text-anchor: middle;
}

.g-key {
  font-size: 16px;
  font-weight: 700;
  fill: currentColor;
}

.g-folder {
  font-size: 11px;
  font-weight: 700;
  fill: #fff;
}

.g-scan {
  font-size: 17px;
  fill: currentColor;
}

.ocr {
  width: 24px;
  flex: none;
  font-family: "Liberation Sans", sans-serif;
  font-size: 11.5px;
  font-weight: 700;
  letter-spacing: -0.5px;
  white-space: nowrap;
}

.ocr b {
  background: #1a1a1a;
  color: #fff;
  padding: 3px 0 3px 1px;
}

/* ===== 外框 ===== */
.app {
  position: relative;
  width: 1621px;
  height: 1097px;
  margin: 1px 0 0 1px;
  border: 2px solid #8c8c8c;
  display: flex;
  flex-direction: column;
}

/* 图标 + 文字 */
.tb {
  display: inline-flex;
  align-items: center;
  gap: 2px;
  white-space: nowrap;
}

/* ===== 标题栏 ===== */
.titlebar {
  height: 46px;
  flex: none;
  display: flex;
  align-items: center;
  padding-left: 11px;
  border-bottom: 2px solid #e6e6e6;
}

.logo {
  width: 22px;
  height: 22px;
}

.brand {
  margin-left: 9px;
  font-weight: 600;
  letter-spacing: 0.25px;
}

.pill {
  margin-left: 8px;
  height: 29px;
  padding: 0 11.5px;
  display: flex;
  align-items: center;
  background: #a9dfe1;
  border-radius: 11px;
}

.title-right {
  margin-left: auto;
  display: flex;
  align-items: center;
  gap: 15px;
  padding-right: 16px;
}

.deepseek {
  color: #4d6bfe;
  letter-spacing: 0.4px;
}

.whale-ic {
  width: 26px;
  height: 26px;
}

.win-btn {
  width: 24px;
  height: 24px;
  background: #e2e2e2;
  border-radius: 6px;
  display: inline-flex;
  align-items: center;
  justify-content: center;
  flex: none;
}

/* ===== 菜单栏 ===== */
.menubar {
  height: 39px;
  flex: none;
  display: flex;
  align-items: center;
  gap: 18.5px;
  padding-left: 17px;
  border-bottom: 1px solid #c4c4c4;
}

.menu-right {
  margin-left: auto;
  display: flex;
  gap: 17px;
  padding-right: 84px;
}

.menu-right .ic {
  width: 21px;
  height: 21px;
}

.store {
  color: #0b7d0b;
}

/* ===== 主体 ===== */
.main {
  flex: 1;
  min-height: 0;
  display: flex;
}

.split {
  width: 7px;
  flex: none;
  background: #f4f4f4;
  border-left: 1px solid #bdbdbd;
  border-right: 1px solid #bdbdbd;
}

/* ===== 左栏 ===== */
.left {
  width: 379px;
  flex: none;
  display: flex;
  flex-direction: column;
}

.left-head {
  height: 92px;
  flex: none;
  padding: 15px 15px 0;
  border-bottom: 1px solid #b4b4b4;
}

.search-box {
  height: 37px;
  border: 2px solid #b2b2b8;
  display: flex;
  align-items: center;
  justify-content: space-between;
  padding: 0 6px 0 11px;
}

.placeholder {
  color: #b9b9b9;
}

.search-btn {
  width: 24px;
  height: 24px;
  background: #ebebeb;
  border-radius: 6px;
  display: inline-flex;
  align-items: center;
  justify-content: center;
  flex: none;
}

.left-title {
  height: 37px;
  margin-top: 2px;
  display: flex;
  align-items: center;
  justify-content: center;
}

.tree-wrap {
  flex: 1;
  min-height: 0;
  display: flex;
  overflow: hidden;
}

.tree {
  flex: 1;
  padding-top: 2px;
  overflow: hidden;
}

.row {
  height: 42px;
  display: flex;
  align-items: center;
}

.row span {
  padding-top: 2px;
}

.row.selected {
  background: #cce6ff;
}

.lv0 { padding-left: 15px; }
.lv0 .ic24 { margin: 0 7px 0 8px; }
.lv1 { padding-left: 38px; }
.lv1 .ic-grid { margin: 0 6px 0 8px; }
.lv2 { padding-left: 74px; }

.ic-grid {
  width: 22px;
  height: 22px;
  flex: none;
}

.ic-play {
  width: 17px;
  height: 21px;
  flex: none;
  margin-right: 11px;
}

.tri-open {
  display: block;
  width: 9px;
  height: 8px;
  margin-right: 2px;
  flex: none;
  background: #1d1d1d;
  clip-path: polygon(100% 0, 100% 100%, 0 100%);
}

.tri-closed {
  display: block;
  width: 7px;
  height: 11px;
  margin-left: 4px;
  flex: none;
  background: #5a5a5a;
  clip-path: polygon(0 0, 100% 50%, 0 100%);
}

.tri-none {
  display: block;
  width: 11px;
  flex: none;
}

/* 滚动条 */
.sbar {
  width: 18px;
  flex: none;
  display: flex;
  flex-direction: column;
}

.sbar-left {
  margin-right: 1px;
}

.sbar-btn {
  height: 26px;
  flex: none;
  background: #f7f7f7;
  display: flex;
  align-items: center;
  justify-content: center;
}

.chev {
  width: 8px;
  height: 8px;
}

.chev.flip {
  transform: rotate(180deg);
}

.sbar-thumb {
  height: 275px;
  flex: none;
  background: #e1e1e1;
}

.thumb-steps {
  height: 88px;
}

.sbar-track {
  flex: 1;
  background: #f9f9f9;
}

/* 应用程序配置 */
.config {
  height: 417px;
  flex: none;
  border-top: 1px solid #ececec;
}

.config-head {
  height: 42px;
  display: flex;
  align-items: center;
  padding-left: 15px;
}

.config-head span {
  padding-top: 2px;
}

.config-head .tri-open {
  margin-right: 7px;
}

.app-box {
  width: 101px;
  height: 93px;
  margin: 11px auto 0;
  border: 2px solid #808080;
  display: flex;
  flex-direction: column;
  align-items: center;
  justify-content: flex-end;
  padding-bottom: 6px;
}

.cubes-big {
  width: 46px;
  height: 46px;
  margin-bottom: 4px;
}

.config-icons {
  display: flex;
  justify-content: center;
  gap: 15px;
  margin-top: 8px;
}

.field-label {
  height: 28px;
  margin: 6px 0 4px;
  padding: 2px 0 0 15px;
  display: flex;
  align-items: center;
}

.field {
  height: 45px;
  margin: 0 15px;
  padding: 2px 0 0 19px;
  display: flex;
  align-items: center;
  border: 1.5px solid #a8a8a8;
  border-radius: 9px;
}

.field + .field-label {
  margin-top: 15px;
}

.config-btns {
  display: flex;
  justify-content: center;
  gap: 23px;
  margin-top: 15px;
}

.btn {
  width: 78px;
  height: 33px;
  padding-top: 2px;
  border: 1.5px solid #8f8f8f;
  border-radius: 5px;
  display: flex;
  align-items: center;
  justify-content: center;
}

/* ===== 中栏 ===== */
.mid {
  width: 848px;
  flex: none;
  display: flex;
  flex-direction: column;
}

.toolbar {
  height: 44px;
  flex: none;
  display: flex;
  align-items: center;
  gap: 21px;
  border-bottom: 1px solid #bdbdbd;
}

.nav-btns {
  width: 81px;
  height: 100%;
  padding-left: 9px;
  display: flex;
  align-items: center;
  gap: 16px;
  border-right: 1px solid #c8c8c8;
  margin-right: -4px;
  color: #d4d4d4;
}

.nav {
  width: 21px;
  height: 21px;
}

.ic-run {
  width: 16px;
  height: 21px;
  margin-right: 7px;
  flex: none;
}

.ask {
  margin: 0 1px 0 -1px;
}

.modes {
  display: flex;
  font-size: 17px;
  height: 27px;
}

.mode {
  width: 72px;
  background: #e4e4e4;
  display: flex;
  align-items: center;
  justify-content: center;
  white-space: nowrap;
}

.mode.active {
  background: #ffa500;
}

.step-search {
  display: inline-flex;
  align-items: center;
  gap: 4px;
}

.head {
  height: 133px;
  flex: none;
  padding: 12px 0 0 7px;
  border-bottom: 1px solid #8f8f8f;
}

.head-title {
  height: 24px;
  padding-left: 1px;
  display: flex;
  align-items: center;
  gap: 16px;
}

.head-title strong {
  font-size: 23px;
}

.head-title .tb {
  gap: 3px;
}

.fn-grid {
  display: grid;
  grid-template-columns: repeat(6, 112.6px) 77px 77px;
  grid-auto-rows: 23px;
  margin-top: 11px;
}

.fn {
  display: flex;
  align-items: center;
  gap: 2.5px;
  padding-left: 9px;
  white-space: nowrap;
}

.fn.open {
  background: #c9e6f5;
}

.fn-break {
  grid-column: 1;
}

.actions {
  height: 24px;
  margin-top: 8px;
  padding-left: 9px;
  display: flex;
  gap: 17.5px;
}

.act {
  display: flex;
  align-items: center;
  gap: 3px;
  white-space: nowrap;
}

/* 步骤列表 */
.steps-wrap {
  height: 514px;
  flex: none;
  display: flex;
}

.steps-area {
  flex: 1;
  min-width: 0;
  padding-bottom: 30px;
}

.steps {
  height: 100%;
  padding-top: 1px;
  overflow: hidden;
}

.step {
  height: 42px;
  display: flex;
  align-items: center;
}

.num {
  width: 46px;
  margin-right: 14px;
  padding-top: 2px;
  flex: none;
  display: flex;
  justify-content: center;
  font-size: 20px;
  color: #b3bccc;
}

.num .tri-open {
  margin: 0;
}

.txt {
  padding-top: 2px;
}

.step > .ic24 {
  margin-right: 5px;
}

.braces {
  width: 24px;
  margin-right: 5px;
  text-align: center;
  white-space: nowrap;
  font-weight: 700;
  font-size: 22px;
}

.group {
  margin-left: 45px;
  border-top: 2px solid #808080;
  border-left: 2px solid #808080;
  border-bottom: 1px solid #808080;
}

.group .step:first-child {
  margin-top: -2px;
}

.group .step:last-child {
  margin-bottom: -1px;
}

.group .num {
  width: 42px;
  margin-right: 16px;
}

/* 复选框行 */
.checks {
  height: 47px;
  flex: none;
  display: flex;
  align-items: center;
  gap: 9px;
  padding-left: 10px;
  border-top: 2px solid #b0b0b4;
  border-bottom: 2px solid #c0c0c4;
}

.chk {
  display: flex;
  align-items: center;
  gap: 8px;
  white-space: nowrap;
}

.box {
  width: 20px;
  height: 20px;
  flex: none;
  border: 1.5px solid #7a7a7a;
  display: block;
}

.box svg {
  display: block;
  width: 17px;
  height: 17px;
}

.pop-log {
  margin-left: 5px;
  gap: 3px;
}

.pop-log .ic {
  width: 22px;
  height: 22px;
}

.log {
  flex: 1;
}

/* ===== 右栏 ===== */
.rail {
  width: 47px;
  flex: none;
  padding: 46px 0 0 2px;
  border-right: 1px solid #b0b0b4;
}

.rail-item {
  width: 42px;
  height: 42px;
  display: flex;
  align-items: center;
  justify-content: center;
}

.rail-item.on {
  background: #cce6ff;
}

.right {
  flex: 1;
  min-width: 0;
}

.right-head {
  height: 45px;
  display: flex;
  align-items: center;
  justify-content: space-between;
  padding: 0 17px 0 12px;
  border-bottom: 1px solid #adadb2;
}

.mod-list {
  padding: 2px 0 0 17px;
}

.mod {
  height: 42px;
  display: flex;
  align-items: center;
  gap: 4px;
  white-space: nowrap;
}

/* ===== 状态栏 ===== */
.status {
  height: 39px;
  flex: none;
  display: flex;
  align-items: center;
  justify-content: flex-end;
  padding-right: 7px;
  border-top: 1px solid #e0e0e0;
}

/* ===== 弹出菜单 ===== */
.popup {
  position: absolute;
  background: #fff;
  border: 1px solid #a2a2a2;
  box-shadow: inset 0 0 0 2px #efefef;
}

.popup-main {
  left: 619px;
  top: 222px;
  width: 220px;
  height: 368px;
  padding: 2px 3px;
}

.popup-sub {
  left: 835px;
  top: 252px;
  width: 242px;
  height: 338px;
  padding: 4px 4px;
  box-shadow: inset 0 0 0 4px #efefef;
}

.pop-item {
  position: relative;
  height: 33px;
  padding: 1px 0 0 50px;
  display: flex;
  align-items: center;
}

.pop-item.hover {
  background: #f0f0f0;
}

.tri-menu {
  position: absolute;
  right: 6px;
  top: 11px;
  width: 6px;
  height: 11px;
  background: #333;
  clip-path: polygon(0 0, 100% 50%, 0 100%);
}

.popup-sub .tri-menu {
  right: 8px;
}
```
